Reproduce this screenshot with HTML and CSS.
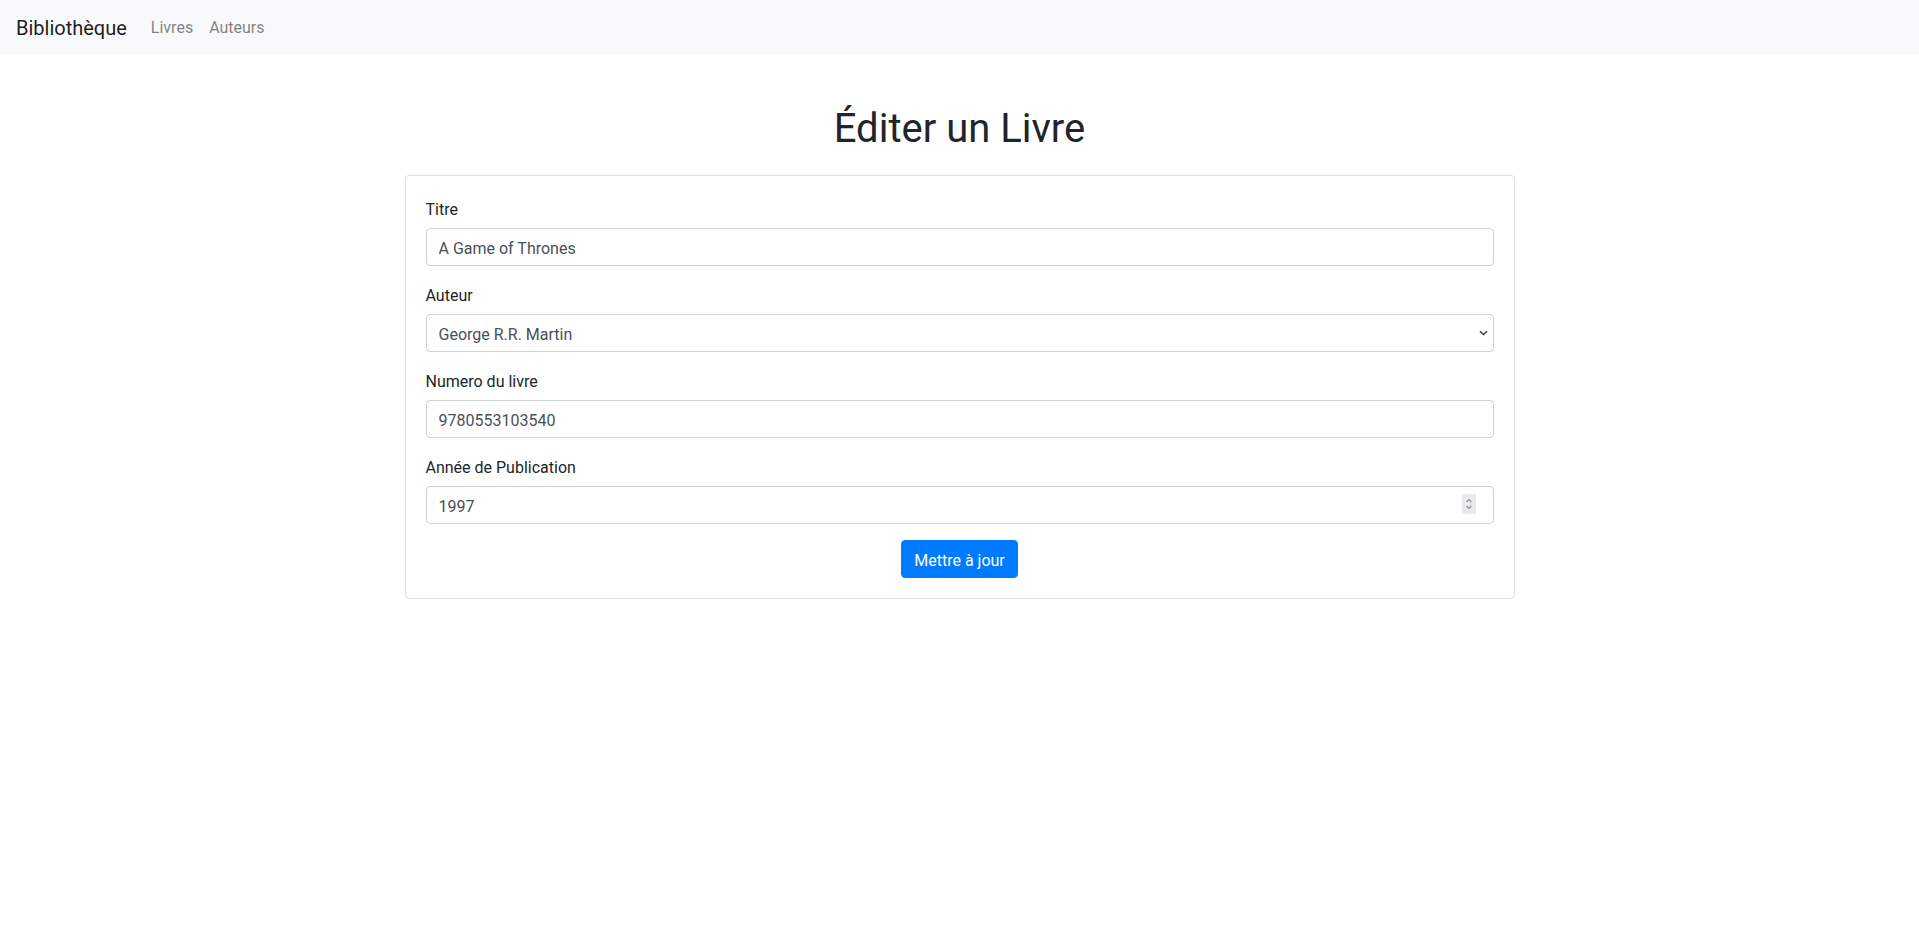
FILE: index.html
```html
<!DOCTYPE html>
<html lang="fr">
<head>
<meta charset="utf-8">
<title>Éditer un Livre</title>
<link rel="stylesheet" href="styles.css">
</head>
<body>
<nav class="navbar">
  <a class="brand" href="#">Bibliothèque</a>
  <ul class="nav">
    <li><a class="nav-link" href="#">Livres</a></li>
    <li><a class="nav-link" href="#">Auteurs</a></li>
  </ul>
</nav>
<main class="container">
  <h1 class="title">Éditer un Livre</h1>
  <div class="card">
    <form class="card-body">
      <div class="form-group">
        <label for="titre">Titre</label>
        <input class="form-control" id="titre" type="text" value="A Game of Thrones">
      </div>
      <div class="form-group">
        <label for="auteur">Auteur</label>
        <div class="field">
          <select class="form-control select" id="auteur">
            <option selected>George R.R. Martin</option>
          </select>
          <svg class="chevron" width="9" height="6" viewBox="0 0 9 6"><path d="M1 1.2 L4.5 4.6 L8 1.2" fill="none" stroke="#3b3b3b" stroke-width="1.4"/></svg>
        </div>
      </div>
      <div class="form-group">
        <label for="numero">Numero du livre</label>
        <input class="form-control" id="numero" type="text" value="9780553103540">
      </div>
      <div class="form-group">
        <label for="annee">Année de Publication</label>
        <div class="field">
          <input class="form-control number" id="annee" type="number" value="1997">
          <span class="spinner">
            <svg width="14" height="20" viewBox="0 0 14 20"><path d="M4.5 8 L7 5.5 L9.5 8 M4.5 12 L7 14.5 L9.5 12" fill="none" stroke="#8a8a8a" stroke-width="1.1"/></svg>
          </span>
        </div>
      </div>
      <div class="actions">
        <button class="btn" type="button">Mettre à jour</button>
      </div>
    </form>
  </div>
</main>
</body>
</html>
```
FILE: styles.css
```css
* { box-sizing: border-box; }
html, body { margin: 0; }
body {
  font-family: "Segoe UI", Roboto, "Liberation Sans", sans-serif;
  font-size: 16px;
  line-height: 1.5;
  color: #212529;
  background: #fff;
}
.navbar {
  display: flex;
  align-items: center;
  padding: 0 16px;
  background: #f8f9fa;
  height: 55px;
}
.brand {
  font-size: 20px;
  line-height: 30px;
  padding: 5px 0;
  margin-right: 16px;
  color: rgba(0,0,0,.9);
  text-decoration: none;
}
.nav {
  display: flex;
  list-style: none;
  margin: 0;
  padding: 0;
}
.nav-link {
  display: block;
  padding: 8px 8px;
  color: rgba(0,0,0,.5);
  text-decoration: none;
}
.container {
  width: 1140px;
  margin: 48px auto 0;
  padding: 0 15px;
}
.title {
  margin: 0 0 24px;
  padding-top: 2px;
  height: 48px;
  font-size: 40px;
  font-weight: 400;
  line-height: 48px;
  text-align: center;
  box-sizing: border-box;
}
.card {
  border: 1px solid rgba(0,0,0,.125);
  border-radius: 4px;
}
.card-body {
  padding: 20px;
  margin: 0;
}
.form-group {
  margin-bottom: 16px;
}
label {
  display: block;
  padding-top: 1.5px;
  margin-bottom: 6.5px;
  line-height: 24px;
}
.field {
  position: relative;
}
.form-control {
  display: block;
  width: 100%;
  height: 38px;
  padding: 7.5px 12px 4.5px;
  font: inherit;
  font-size: 16px;
  line-height: 24px;
  color: #495057;
  background: #fff;
  border: 1px solid #ced4da;
  border-radius: 4px;
  outline: none;
}
.select {
  -webkit-appearance: none;
  appearance: none;
  padding-right: 28px;
}
.chevron {
  position: absolute;
  right: 6px;
  top: 16px;
  pointer-events: none;
}
.number {
  -moz-appearance: textfield;
  appearance: textfield;
}
.number::-webkit-inner-spin-button,
.number::-webkit-outer-spin-button {
  -webkit-appearance: none;
  margin: 0;
}
.spinner {
  position: absolute;
  right: 18px;
  top: 8px;
  width: 14px;
  height: 20px;
  background: #e9e9ed;
  display: flex;
  pointer-events: none;
}
.actions {
  display: flex;
  justify-content: center;
}
.btn {
  font: inherit;
  font-size: 16px;
  line-height: 24px;
  height: 38px;
  padding: 7.5px 12px 4.5px;
  color: #fff;
  background: #007bff;
  border: 1px solid #007bff;
  border-radius: 4px;
  cursor: pointer;
}
```
